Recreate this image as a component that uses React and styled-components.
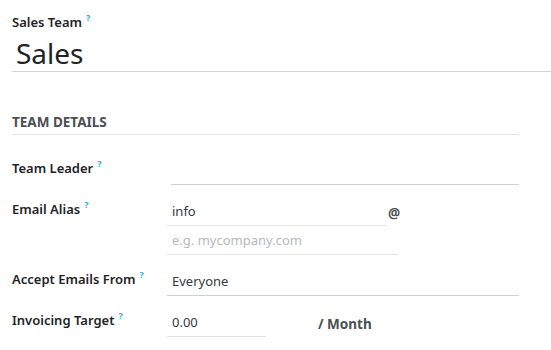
import styled, { createGlobalStyle } from "styled-components";

// --------------------------------------------------

const GlobalStyle = createGlobalStyle`
	html, body {
		margin: 0;
		background: #fff;
		font-family: "Noto Sans", "Open Sans", sans-serif;
		color: #212529;
	}
`;

const Sheet = styled.div`
	padding: 13px 0 0 12px;
`;

const Label = styled.div`
	font-size: 13px;
	font-weight: 600;
	line-height: 18px;
	color: #1f2326;
	padding-top: ${props => props.offset || 0}px;
`;

const Help = styled.sup`
	color: #2ab0cb;
	font-size: 9px;
	font-weight: 700;
	margin-left: 4px;
	vertical-align: 6px;
	line-height: 0;
`;

const TitleInput = styled.div`
	font-size: 28px;
	line-height: 36px;
	padding: 4px 4px 0;
	color: #1f2326;
	border-bottom: 1px solid #d4d4d4;
`;

const Section = styled.section`
	margin: 41px 32px 0 0;
`;

const SectionTitle = styled.h3`
	margin: 0;
	font-size: 13.5px;
	font-weight: 700;
	color: #4a4f55;
	text-transform: uppercase;
	line-height: 18px;
	padding-bottom: 3px;
	border-bottom: 1px solid #e4e4e4;
`;

const Grid = styled.div`
	display: grid;
	grid-template-columns: 155px 1fr;
	row-gap: 12px;
	margin-top: 21px;
`;

const Fields = styled.div`
	display: flex;
	flex-direction: column;
`;

const FieldLine = styled.div`
	display: flex;
	align-items: center;
`;

const Input = styled.div`
	box-sizing: border-box;
	height: 29px;
	width: ${props => props.width ? `${props.width}px` : "auto"};
	margin-left: ${props => props.indent || 0}px;
	padding: 4px 5px 0;
	font-size: 13px;
	line-height: 20px;
	color: ${props => props.placeholder ? "#b5b9bd" : "#343a40"};
	border-bottom: 1px solid ${props => props.strong ? "#cdd0d5" : "#e2e4e7"};
`;

const Unit = styled.span`
	font-size: 13.5px;
	font-weight: 700;
	color: #4a4f55;
	margin-left: ${props => props.gap || 2}px;
	padding-top: 2px;
`;

export default function App() {
	return (
		<Sheet>
			<GlobalStyle />
			<Label>Sales Team<Help>?</Help></Label>
			<TitleInput>Sales</TitleInput>

			<Section>
				<SectionTitle>Team Details</SectionTitle>
				<Grid>
					<Label offset={3}>Team Leader<Help>?</Help></Label>
					<Input strong indent={4} />

					<Label offset={3}>Email Alias<Help>?</Help></Label>
					<Fields>
						<FieldLine>
							<Input width={219}>info</Input>
							<Unit>@</Unit>
						</FieldLine>
						<Input width={231} placeholder>e.g. mycompany.com</Input>
					</Fields>

					<Label offset={3}>Accept Emails From<Help>?</Help></Label>
					<Input strong>Everyone</Input>

					<Label offset={3}>Invoicing Target<Help>?</Help></Label>
					<FieldLine>
						<Input width={99}>0.00</Input>
						<Unit gap={52}>/ Month</Unit>
					</FieldLine>
				</Grid>
			</Section>
		</Sheet>
	);
}
